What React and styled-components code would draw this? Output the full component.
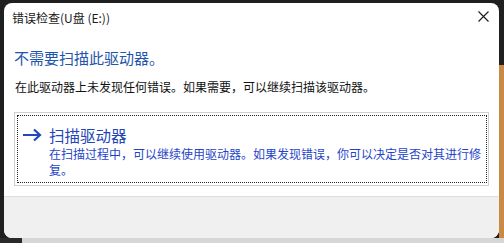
import { createGlobalStyle } from "styled-components";
import styled from "styled-components";

const GlobalStyle = createGlobalStyle`
  html, body {
    margin: 0;
    padding: 0;
    background: #1f1f1f;
    overflow: hidden;
  }
  body {
    font-family: "Noto Sans CJK SC", "Noto Sans", sans-serif;
  }
`;

// D E S K T O P
const Screen = styled.div`
  width: 504px;
  height: 243px;
  display: flex;
  flex-direction: column;
  background: #1f1f1f;
`;

const Row = styled.div`
  display: flex;
  height: 238px;
  padding-top: 3px;
  padding-left: 4px;
  box-sizing: border-box;
`;

const RightEdge = styled.div`
  width: 5px;
  display: flex;
  flex-direction: column;
  margin-top: -3px;
`;

const EdgePiece = styled.div`
  height: ${({ $h }) => $h};
  width: ${({ $w }) => $w || "auto"};
  flex: ${({ $grow }) => ($grow ? 1 : "none")};
  background: ${({ $color }) => $color};
`;

const BottomStrip = styled.div`
  height: 5px;
  display: flex;
`;

// W I N D O W
const Window = styled.div`
  width: 495px;
  height: 235px;
  background: #ffffff;
  border-radius: 8px;
  overflow: hidden;
  display: flex;
  flex-direction: column;
`;

const TitleBar = styled.div`
  height: 28px;
  display: flex;
  align-items: center;
  justify-content: space-between;
  padding: 0 10px 0 8px;
  font-size: 12px;
  color: #1a1a1a;
`;

const Close = styled.svg`
  width: 11px;
  height: 11px;
  margin-top: -1px;
`;

const Content = styled.div`
  flex: 1;
  padding: 17px 10px 0 10px;
  display: flex;
  flex-direction: column;
`;

const Heading = styled.div`
  font-size: 15px;
  line-height: 20px;
  color: #1f56ab;
`;

const Body = styled.div`
  margin-top: 11px;
  padding-left: 1px;
  font-size: 12px;
  line-height: 16px;
  color: #111;
`;

const CommandLink = styled.div`
  margin-top: 17px;
  width: 475px;
  height: 74px;
  box-sizing: border-box;
  border: 1px solid #cfcfcf;
  padding: 2px 1px 2px 2px;
`;

const Focus = styled.div`
  height: 100%;
  box-sizing: border-box;
  border: 1px dotted #222;
  display: flex;
  padding: 8px 0 0 4px;
`;

const Arrow = styled.svg`
  width: 20px;
  height: 14px;
  margin-top: 4px;
  flex: none;
`;

const LinkText = styled.div`
  margin-left: 7px;
  width: 438px;
`;

const LinkTitle = styled.div`
  font-size: 15.5px;
  line-height: 22px;
  color: #1f45b8;
`;

const LinkDesc = styled.div`
  font-size: 12px;
  line-height: 15.5px;
  color: #1f45c8;
`;

const Footer = styled.div`
  height: 41px;
  background: #f0f0f0;
  border-top: 1px solid #dedede;
`;

export default function App() {
  return (
    <>
      <GlobalStyle />
      <Screen>
        <Row>
          <Window>
            <TitleBar>
              <span>错误检查(U盘 (E:))</span>
              <Close viewBox="0 0 11 11">
                <path d="M0.5 0.5 L10.5 10.5 M10.5 0.5 L0.5 10.5" stroke="#1a1a1a" strokeWidth="1.1" />
              </Close>
            </TitleBar>
            <Content>
              <Heading>不需要扫描此驱动器。</Heading>
              <Body>在此驱动器上未发现任何错误。如果需要，可以继续扫描该驱动器。</Body>
              <CommandLink>
                <Focus>
                  <Arrow viewBox="0 0 20 14">
                    <path d="M1 7 H18 M12 1.5 L18 7 L12 12.5" fill="none" stroke="#1f48c0" strokeWidth="2.2" />
                  </Arrow>
                  <LinkText>
                    <LinkTitle>扫描驱动器</LinkTitle>
                    <LinkDesc>在扫描过程中，可以继续使用驱动器。如果发现错误，你可以决定是否对其进行修复。</LinkDesc>
                  </LinkText>
                </Focus>
              </CommandLink>
            </Content>
            <Footer />
          </Window>
          <RightEdge>
            <EdgePiece $h="65px" $color="#1f1f1f" />
            <EdgePiece $grow $color="#c98a45" />
          </RightEdge>
        </Row>
        <BottomStrip>
          <EdgePiece $h="5px" $w="22px" $color="#2a2a2a" />
          <EdgePiece $h="5px" $grow $color="#d6d6d6" />
        </BottomStrip>
      </Screen>
    </>
  );
}
